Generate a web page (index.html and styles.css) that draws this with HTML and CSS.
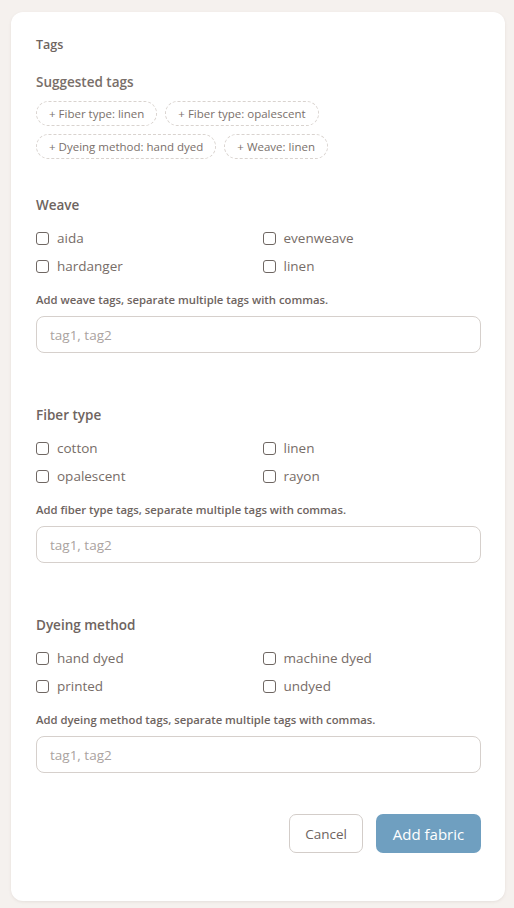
FILE: index.html
```html
<!DOCTYPE html>
<html lang="en">
<head>
<meta charset="utf-8">
<title>Add fabric</title>
<link rel="stylesheet" href="styles.css">
</head>
<body>
<div class="card">
  <div class="title">Tags</div>
  <div class="subtitle">Suggested tags</div>
  <div class="chips">
    <button class="chip">+ Fiber type: linen</button>
    <button class="chip">+ Fiber type: opalescent</button>
    <button class="chip">+ Dyeing method: hand dyed</button>
    <button class="chip">+ Weave: linen</button>
  </div>

  <section class="group">
    <div class="group-title">Weave</div>
    <div class="options">
      <label class="opt"><input type="checkbox"><span>aida</span></label>
      <label class="opt"><input type="checkbox"><span>evenweave</span></label>
      <label class="opt"><input type="checkbox"><span>hardanger</span></label>
      <label class="opt"><input type="checkbox"><span>linen</span></label>
    </div>
    <div class="help">Add weave tags, separate multiple tags with commas.</div>
    <input class="text" type="text" placeholder="tag1, tag2">
  </section>

  <section class="group">
    <div class="group-title">Fiber type</div>
    <div class="options">
      <label class="opt"><input type="checkbox"><span>cotton</span></label>
      <label class="opt"><input type="checkbox"><span>linen</span></label>
      <label class="opt"><input type="checkbox"><span>opalescent</span></label>
      <label class="opt"><input type="checkbox"><span>rayon</span></label>
    </div>
    <div class="help">Add fiber type tags, separate multiple tags with commas.</div>
    <input class="text" type="text" placeholder="tag1, tag2">
  </section>

  <section class="group">
    <div class="group-title">Dyeing method</div>
    <div class="options">
      <label class="opt"><input type="checkbox"><span>hand dyed</span></label>
      <label class="opt"><input type="checkbox"><span>machine dyed</span></label>
      <label class="opt"><input type="checkbox"><span>printed</span></label>
      <label class="opt"><input type="checkbox"><span>undyed</span></label>
    </div>
    <div class="help">Add dyeing method tags, separate multiple tags with commas.</div>
    <input class="text" type="text" placeholder="tag1, tag2">
  </section>

  <div class="actions">
    <button class="btn btn-cancel">Cancel</button>
    <button class="btn btn-primary">Add fabric</button>
  </div>
</div>
</body>
</html>
```
FILE: styles.css
```css
html, body {
  margin: 0;
  padding: 0;
  background: #f5f1ee;
}
body {
  padding: 12px 9px 8px 11px;
  font-family: "Open Sans", "Noto Sans", sans-serif;
  color: #6e6460;
}
.card {
  background: #ffffff;
  border-radius: 12px;
  box-shadow: 0 1px 3px rgba(120, 100, 90, 0.12);
  padding: 24px 24px 48px 25px;
}
.title {
  font-size: 12.5px;
  line-height: 18px;
  font-weight: 600;
  color: #6e6460;
}
.subtitle {
  margin-top: 18px;
  font-size: 13.5px;
  line-height: 20px;
  font-weight: 600;
  color: #786e69;
}
.chips {
  margin-top: 9px;
  display: flex;
  flex-wrap: wrap;
  gap: 8px;
  width: 300px;
}
.chip {
  height: 25px;
  padding: 0 12px;
  border: 1px dashed #d9d3cf;
  border-radius: 13px;
  background: #ffffff;
  font-family: inherit;
  font-size: 11.5px;
  color: #7a706b;
  line-height: 23px;
}
.group {
  margin-top: 52px;
}
.chips + .group {
  margin-top: 36px;
}
.group-title {
  font-size: 13.5px;
  line-height: 20px;
  font-weight: 600;
  color: #6e6460;
}
.options {
  margin-top: 13px;
  display: grid;
  grid-template-columns: 1fr 1fr;
  column-gap: 8px;
  row-gap: 8px;
}
.opt {
  display: flex;
  align-items: center;
  height: 20px;
  font-size: 13.5px;
  color: #776d68;
}
.opt input {
  appearance: none;
  -webkit-appearance: none;
  width: 13px;
  height: 13px;
  margin: 0 8px 0 0;
  border: 1px solid #6f6763;
  border-radius: 3px;
  background: #fff;
  flex: none;
}
.help {
  margin-top: 16px;
  font-size: 11.3px;
  line-height: 16px;
  font-weight: 600;
  color: #6e6460;
}
.text {
  display: block;
  box-sizing: border-box;
  margin-top: 8px;
  width: 100%;
  height: 37px;
  border: 1px solid #d6d0cc;
  border-radius: 8px;
  padding: 0 13px;
  font-family: inherit;
  font-size: 13.5px;
  color: #6e6460;
  background: #fff;
  outline: none;
}
.text::placeholder {
  color: #aaa3a0;
}
.actions {
  margin-top: 41px;
  display: flex;
  justify-content: flex-end;
  gap: 13px;
}
.btn {
  height: 39px;
  border-radius: 7px;
  font-family: inherit;
  box-sizing: border-box;
}
.btn-cancel {
  width: 74px;
  border: 1px solid #d3cdc9;
  background: #fff;
  font-size: 13.5px;
  color: #6e6460;
}
.btn-primary {
  width: 105px;
  border: none;
  background: #6f9fc0;
  color: #ffffff;
  font-size: 15px;
}
```
